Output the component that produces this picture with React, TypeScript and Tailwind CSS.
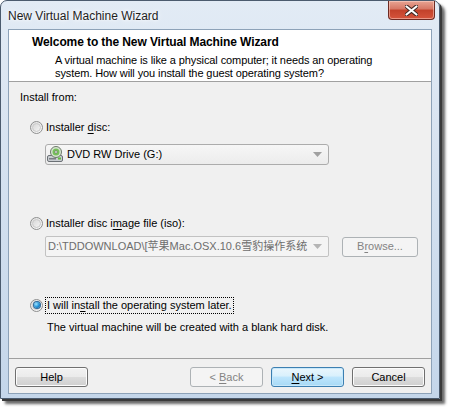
import React from 'react';

const font = { fontFamily: '"Segoe UI", "Liberation Sans", "Noto Sans CJK SC", sans-serif' };

function Radio({ checked }: { checked?: boolean }) {
  return (
    <span className="relative inline-flex h-[13px] w-[13px] shrink-0 items-center justify-center rounded-full border border-[#8e8f8f] bg-gradient-to-br from-[#e0e0e0] to-[#fbfbfb]">
      <span className="h-[9px] w-[9px] rounded-full border border-[#c9c9c9] bg-gradient-to-br from-[#d8d8d8] to-[#f4f4f4]" />
      {checked && (
        <span className="absolute left-[2.5px] top-[2.5px] h-[6px] w-[6px] rounded-full bg-[radial-gradient(circle_at_35%_35%,#9fe3ff,#1c8fd6_55%,#0c4f8a)] shadow-[0_0_0_1px_#2f6a9c]" />
      )}
    </span>
  );
}

function Arrow({ color = '#5c5c5c' }: { color?: string }) {
  return (
    <svg width="9" height="5" viewBox="0 0 9 5" className="shrink-0">
      <path d="M0 0 H9 L4.5 5 Z" fill={color} />
    </svg>
  );
}

function DriveIcon() {
  return (
    <svg width="16" height="17" viewBox="0 0 16 17" className="shrink-0">
      <rect x="0.5" y="9.5" width="15" height="6" rx="1.5" fill="#c9cdd1" stroke="#6b7075" />
      <rect x="2" y="12" width="7" height="1.5" fill="#7a7f84" />
      <rect x="11" y="11.5" width="3" height="2" fill="#5fbf3a" />
      <circle cx="9" cy="6" r="5.5" fill="#d7e6d2" stroke="#6d7a6a" />
      <circle cx="9" cy="6" r="3.5" fill="#76c05a" />
      <circle cx="9" cy="6" r="1.3" fill="#f4f4f4" stroke="#5a6a58" strokeWidth="0.6" />
    </svg>
  );
}

function Btn({
  children,
  kind = 'normal',
}: {
  children: React.ReactNode;
  kind?: 'normal' | 'default' | 'disabled';
}) {
  const cls =
    kind === 'default'
      ? 'border-[#3c7fb1] bg-[linear-gradient(#eaf6fd_0%,#d9f0fc_45%,#bee6fd_50%,#a7d9f5_100%)] text-black shadow-[inset_0_0_0_1px_#c8e8fa]'
      : kind === 'disabled'
      ? 'border-[#adb2b5] bg-[#f4f4f4] text-[#838383]'
      : 'border-[#707070] bg-[linear-gradient(#f2f2f2_0%,#ebebeb_48%,#dddddd_50%,#cfcfcf_100%)] text-black shadow-[inset_0_0_0_1px_#fcfcfc]';
  return (
    <div className={`flex h-[20px] w-[73px] items-center justify-center rounded-[3px] border ${cls}`}>
      {children}
    </div>
  );
}

export default function App() {
  return (
    <div className="h-[409px] w-[450px] overflow-hidden bg-white text-black" style={font}>
      <div className="flex h-[399px] w-[440px] flex-col rounded-t-[7px] border border-[#4b5b6e] bg-[linear-gradient(180deg,#e2ebf5_0%,#d6e2f0_40%,#c4d6ea_100%)] shadow-[2px_2px_0_#3a3a3a,5px_5px_3px_rgba(0,0,0,0.6)]">
        {/* Title bar */}
        <div className="flex h-[28px] shrink-0 items-start">
          <div className="pl-[7px] pt-[6px] text-[12px] leading-[18px] text-[#1e1e1e] [text-shadow:0_0_6px_#ffffff,0_0_3px_#ffffff]">
            New Virtual Machine Wizard
          </div>
          <div className="ml-auto mr-[4px] flex h-[19px] w-[47px] items-center justify-center rounded-b-[4px] border border-t-0 border-[#6d2a22] bg-[linear-gradient(#e8a493_0%,#d67664_45%,#c2412a_50%,#d5543c_100%)] shadow-[inset_0_0_0_1px_rgba(255,220,210,0.5)]">
            <svg width="13" height="11" viewBox="0 0 13 11">
              <path d="M1 1 L12 10 M12 1 L1 10" stroke="#3b2420" strokeWidth="4" strokeLinecap="round" />
              <path d="M1.5 1.5 L11.5 9.5 M11.5 1.5 L1.5 9.5" stroke="#ffffff" strokeWidth="2.2" strokeLinecap="round" />
            </svg>
          </div>
        </div>

        {/* Client area */}
        <div className="mx-[7px] flex h-[365px] flex-col border border-[#8da2b8] bg-[#f0f0f0] text-[11px]">
          {/* Header */}
          <div className="h-[52px] shrink-0 border-b border-[#a0a0a0] bg-white">
            <div className="pl-[23px] pt-[5px] text-[12px] font-bold leading-[15px] tracking-[-0.1px]">
              Welcome to the New Virtual Machine Wizard
            </div>
            <div className="pl-[46px] pt-[4px] leading-[13px] tracking-[-0.1px]">
              A virtual machine is like a physical computer; it needs an operating
              <br />
              system. How will you install the guest operating system?
            </div>
          </div>

          {/* Body */}
          <div className="flex flex-1 flex-col">
            <div className="ml-[11px] mt-[7px] leading-[16px]">Install from:</div>

            <div className="ml-[21px] mt-[14px] flex h-[16px] items-center gap-[3px]">
              <Radio />
              <span>
                Installer <span className="underline underline-offset-2">d</span>isc:
              </span>
            </div>
            <div className="ml-[36px] mt-[9px] flex h-[21px] w-[284px] items-center rounded-[3px] border border-[#acacac] bg-[linear-gradient(#f6f6f6,#ececec)] pl-[1px] pr-[6px]">
              <DriveIcon />
              <span className="ml-[4px]">DVD RW Drive (G:)</span>
              <span className="ml-auto">
                <Arrow color="#a0a0a0" />
              </span>
            </div>

            <div className="ml-[21px] mt-[50px] flex h-[16px] items-center gap-[3px]">
              <Radio />
              <span>
                Installer disc i<span className="underline underline-offset-2">m</span>age file (iso):
              </span>
            </div>
            <div className="mt-[5px] flex items-center">
              <div className="ml-[36px] flex h-[21px] w-[284px] items-center overflow-hidden rounded-[2px] border border-[#c2c2c2] bg-[#f4f4f4] pr-[6px]">
                <span className="w-[262px] shrink-0 overflow-hidden whitespace-nowrap pl-[2px] text-[#6d6d6d]">
                  D:\TDDOWNLOAD\[苹果Mac.OSX.10.6雪豹操作系统
                </span>
                <span className="ml-auto">
                  <Arrow color="#b5b5b5" />
                </span>
              </div>
              <div className="ml-[13px] flex h-[20px] w-[76px] items-center justify-center rounded-[3px] border border-[#adb2b5] bg-[#f4f4f4] text-[#838383]">
                <span>
                  B<span className="underline underline-offset-2">r</span>owse...
                </span>
              </div>
            </div>

            <div className="ml-[21px] mt-[40px] flex h-[16px] items-center gap-[2px]">
              <Radio checked />
              <span className="border border-dotted border-black px-[1px] leading-[15px]">
                I will in<span className="underline underline-offset-2">s</span>tall the operating system later.
              </span>
            </div>
            <div className="ml-[38px] mt-[6px] leading-[16px]">
              The virtual machine will be created with a blank hard disk.
            </div>
          </div>

          {/* Footer */}
          <div className="flex h-[35px] shrink-0 items-start border-t border-[#a0a0a0] px-[6px] pt-[8px]">
            <Btn>Help</Btn>
            <div className="ml-auto flex gap-[8px]">
              <Btn kind="disabled">
                &lt; <span className="ml-[3px] underline underline-offset-2">B</span>ack
              </Btn>
              <Btn kind="default">
                <span className="underline underline-offset-2">N</span>ext &gt;
              </Btn>
              <Btn>Cancel</Btn>
            </div>
          </div>
        </div>
      </div>
    </div>
  );
}
